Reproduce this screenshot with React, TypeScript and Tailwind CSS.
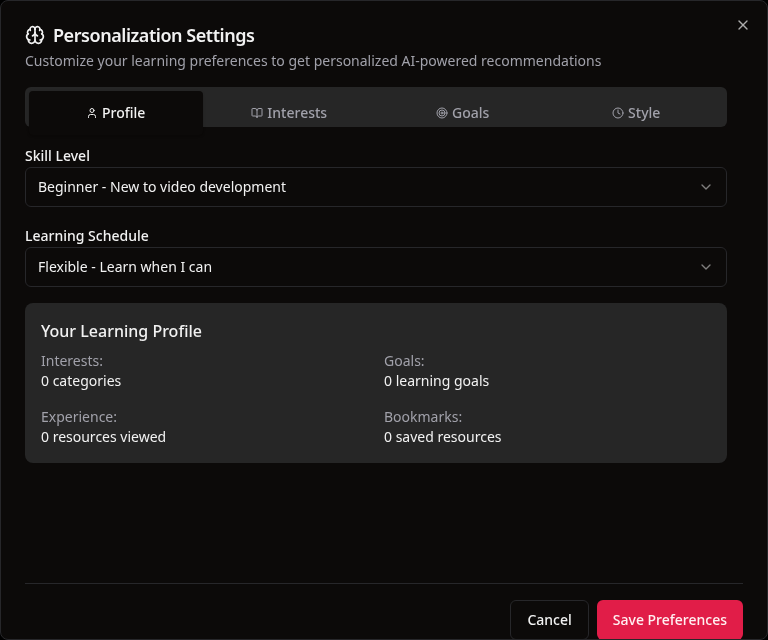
import React from "react";
import { Brain, X, User, BookOpen, Target, Clock, ChevronDown } from "lucide-react";

const tabs = [
  { label: "Profile", Icon: User, active: true },
  { label: "Interests", Icon: BookOpen, active: false },
  { label: "Goals", Icon: Target, active: false },
  { label: "Style", Icon: Clock, active: false },
];

const stats = [
  ["Interests:", "0 categories"],
  ["Goals:", "0 learning goals"],
  ["Experience:", "0 resources viewed"],
  ["Bookmarks:", "0 saved resources"],
];

function SelectField({ label, value }: { label: string; value: string }) {
  return (
    <div>
      <div className="h-[22px] text-sm leading-[22px] font-medium">{label}</div>
      <button className="flex h-10 w-full items-center justify-between rounded-md border border-[#27272a] bg-[#0c0a09] px-3 text-sm">
        <span>{value}</span>
        <ChevronDown className="size-4 opacity-50" />
      </button>
    </div>
  );
}

export default function App() {
  return (
    <div className="h-[640px] w-[768px] overflow-hidden bg-black">
      <div className="relative h-[640px] w-[768px] overflow-hidden rounded-lg border border-[#27272a] bg-[#0c0a09] px-6 pt-6 font-['Noto_Sans',sans-serif] text-[#f2f2f2] will-change-transform">
        <button className="absolute top-4 right-4 opacity-70">
          <X className="size-4" />
        </button>
        <h2 className="mt-px flex h-[18px] items-center gap-2 text-lg leading-none font-semibold tracking-tight">
          <Brain className="size-5" />
          Personalization Settings
        </h2>
        <p className="mt-[7px] text-sm text-[#a1a1aa]">
          Customize your learning preferences to get personalized AI-powered recommendations
        </p>
        <div className="mt-4 w-[702px]">
          <div className="grid h-10 grid-cols-4 rounded-md bg-[#262626] px-1 pt-1 text-[#a1a1aa]">
            {tabs.map(({ label, Icon, active }) => (
              <button
                key={label}
                className={`flex h-11 items-center justify-center gap-1 rounded-sm text-sm font-medium ${active ? "bg-[#0c0a09] text-[#f2f2f2] shadow-sm" : ""}`}
              >
                <Icon className="size-3" />
                {label}
              </button>
            ))}
          </div>
          <div className="mt-[18px] space-y-[18px]">
            <SelectField label="Skill Level" value="Beginner - New to video development" />
            <SelectField label="Learning Schedule" value="Flexible - Learn when I can" />
          </div>
          <div className="mt-4 h-40 rounded-lg bg-[#262626] p-4">
            <h4 className="mb-2 text-base font-medium">Your Learning Profile</h4>
            <div className="grid grid-cols-2 gap-4 text-sm">
              {stats.map(([k, v]) => (
                <div key={k}>
                  <div className="text-[#a1a1aa]">{k}</div>
                  <div>{v}</div>
                </div>
              ))}
            </div>
          </div>
        </div>
        <div className="mt-[120px] flex w-[718px] justify-end gap-2 border-t border-[#27272a] pt-4 text-sm font-medium">
          <button className="h-10 rounded-md border border-[#27272a] px-4">Cancel</button>
          <button className="h-10 rounded-md bg-[#e11d48] px-4 text-[#fff1f2]">Save Preferences</button>
        </div>
      </div>
    </div>
  );
}
